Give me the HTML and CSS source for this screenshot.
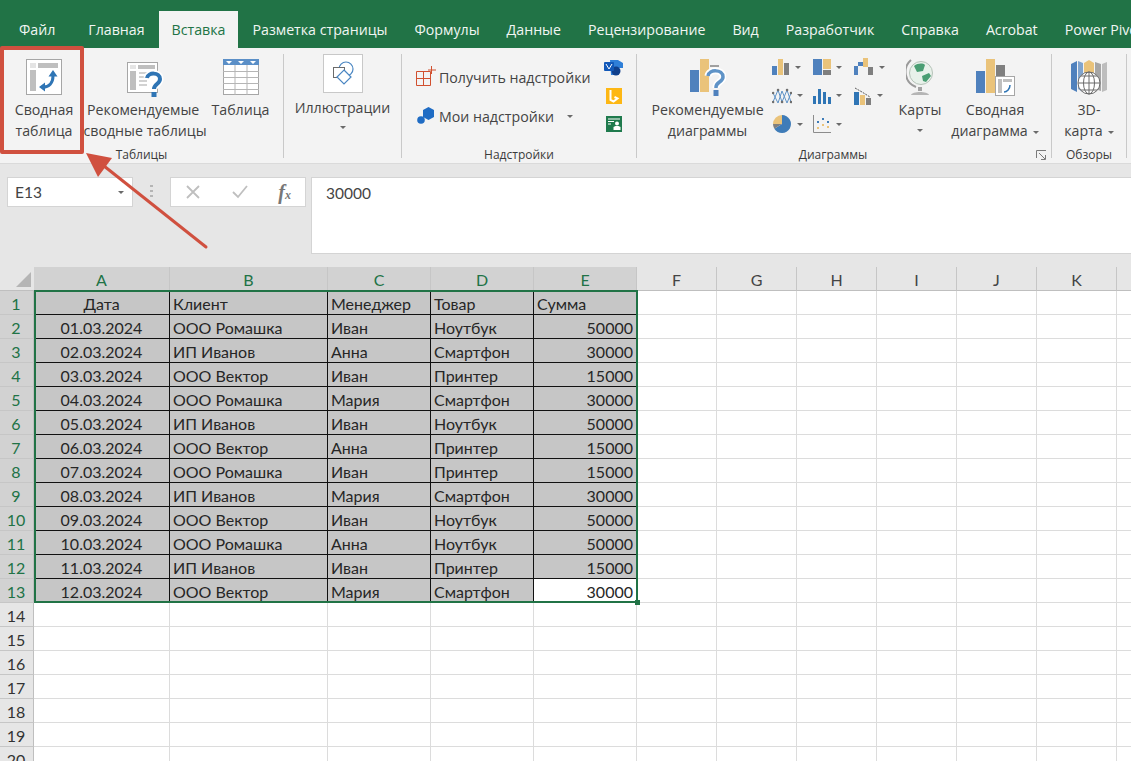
FILE: index.html
```html
<!DOCTYPE html>
<html lang="ru">
<head>
<meta charset="utf-8">
<title>Excel — Вставка</title>
<link rel="stylesheet" href="styles.css">
</head>
<body>
<div class="app">
  <nav class="tabs">
    <span class="tab first-tab">Файл</span><span class="tab">Главная</span><span class="tab active">Вставка</span><span class="tab">Разметка страницы</span><span class="tab">Формулы</span><span class="tab">Данные</span><span class="tab">Рецензирование</span><span class="tab">Вид</span><span class="tab">Разработчик</span><span class="tab">Справка</span><span class="tab">Acrobat</span><span class="tab">Power Pivot</span>
  </nav>
  <section class="ribbon">
    <div class="group g-tables">
      <div class="group-body">
        <div class="big b-pivot">
          <svg class="ico" width="36" height="36" viewBox="0 0 36 36"><rect x=".5" y=".5" width="35" height="35" fill="#fff" stroke="#a6a6a6"/><rect x="12" y="4" width="20" height="5" fill="#bfbfbf"/><rect x="4" y="4" width="6" height="5" fill="#e4e4e4"/><rect x="4" y="11" width="6" height="21" fill="#bfbfbf"/><path d="M17 28c6 0 10-4 10-11" fill="none" stroke="#2f75b5" stroke-width="3"/><path d="M13 28l6-4.500v9zM27 11l4.500 6.500h-9z" fill="#2f75b5"/></svg>
          <span>Сводная<br>таблица</span>
        </div>
        <div class="big b-rec">
          <svg class="ico ico-over" width="36" height="36" viewBox="0 0 36 36"><rect x=".5" y="3.500" width="30" height="30" fill="#fff" stroke="#a6a6a6"/><rect x="11" y="6" width="17" height="4" fill="#bfbfbf"/><rect x="3" y="6" width="6" height="4" fill="#e4e4e4"/><rect x="3" y="12" width="6" height="19" fill="#bfbfbf"/><path d="M12 14h14M12 18h8M12 22h8M12 26h8" stroke="#c4c4c4" stroke-width="1.500"/><path d="M20 19c1-6 13-6 13 1 0 5-6 5-6 10" fill="none" stroke="#fff" stroke-width="7"/><path d="M20 19c1-6 13-6 13 1 0 5-6 5-6 10" fill="none" stroke="#2f75b5" stroke-width="4"/><rect x="24.500" y="33" width="5" height="5" fill="#2f75b5"/></svg>
          <span>Рекомендуемые&nbsp;<br>сводные таблицы</span>
        </div>
        <div class="big b-table">
          <svg class="ico" width="36" height="36" viewBox="0 0 36 36"><rect x=".5" y=".5" width="35" height="35" fill="#fff" stroke="#a6a6a6"/><rect x="0" y="0" width="36" height="6" fill="#5b8fc7"/><path d="M3 2h6l-3 3zM15 2h6l-3 3zM27 2h6l-3 3z" fill="#fff"/><path d="M12 6v30M24 6v30M0 12.500h36M0 18.500h36M0 24.500h36M0 30.500h36" stroke="#b5b5b5" fill="none"/></svg>
          <span>Таблица</span>
        </div>
      </div>
      <div class="group-label">Таблицы</div>
    </div>
    <div class="group g-ill">
      <div class="group-body">
        <div class="big b-ill">
          <svg class="ico ill-ico" width="40" height="39" viewBox="0 0 40 39"><rect x=".5" y=".5" width="39" height="38" fill="#fff" stroke="#c8c8c8"/><circle cx="23" cy="15" r="7" fill="#fff" stroke="#4a86c2" stroke-width="1.200"/><rect x="10.500" y="13.500" width="11" height="10" fill="#fff" stroke="#6b6b6b"/><path d="M21 16l7 7-7 7-7-7z" fill="#fff" stroke="#4a86c2" stroke-width="1.200"/></svg>
          <span>Иллюстрации</span>
          <i class="caret caret-solo"></i>
        </div>
      </div>
    </div>
    <div class="group g-addins">
      <div class="group-body addins-body">
        <div class="addin-list">
          <div class="addin first">
            <svg width="20" height="20" viewBox="0 0 20 20"><path d="M.5 5.500h14v14H.5zM7.500 5.500v14M.5 12.500h14" fill="none" stroke="#d1502f"/><path d="M15.500 0v8M12 4h8" stroke="#d1502f"/></svg>
            <span>Получить надстройки</span>
          </div>
          <div class="addin second">
            <svg width="18" height="18" viewBox="0 0 18 18"><path d="M11.500 0l5.500 3v7l-5.500 3L6 10V3z" fill="#1f6cc4"/><circle cx="4" cy="13" r="3.800" fill="#1f6cc4"/></svg>
            <span>Мои надстройки</span>
            <i class="caret"></i>
          </div>
        </div>
        <div class="addin-apps">
          <svg width="19" height="16" viewBox="0 0 19 16"><path d="M6 0h8l5 3v5h-6l-2 7H7z" fill="#2f7fd8"/><circle cx="12" cy="11" r="4.500" fill="#0f3f8c"/><rect y="2" width="10" height="9" rx="1" fill="#1258b8"/><path d="M2 4l3 5 3-5" fill="none" stroke="#fff"/></svg>
          <svg width="16" height="16" viewBox="0 0 16 16"><rect width="16" height="16" fill="#fdb714"/><path d="M4.500 2v10l3 1.500 4-3-3-1.500" fill="none" stroke="#fff" stroke-width="2"/></svg>
          <svg width="16" height="16" viewBox="0 0 16 16"><rect width="16" height="16" fill="#1f7a4d"/><path d="M2 3h12M2 5.500h6M2 8h3" stroke="#fff"/><circle cx="11" cy="7.500" r="2" fill="#fff"/><path d="M7.500 14v-3l2-1h3l2 1v3z" fill="#fff"/></svg>
        </div>
      </div>
      <div class="group-label">Надстройки</div>
    </div>
    <div class="group g-charts">
      <div class="group-body charts-body">
        <div class="big b-recchart">
          <svg class="ico tall" width="36" height="37" viewBox="0 0 36 37"><rect x="0" y="11" width="9" height="22" fill="#4f81bd"/><rect x="10" y="0" width="9" height="33" fill="#eac37a"/><rect x="20" y="6" width="9" height="2" fill="#a0a0a0"/><path d="M18 17c1-7 15-7 15 1 0 5-7 5-7 10v1" fill="none" stroke="#fff" stroke-width="7"/><path d="M18 17c1-7 15-7 15 1 0 5-7 5-7 10v1" fill="none" stroke="#5f93c7" stroke-width="3.500"/><rect x="23.500" y="31" width="5" height="6" fill="#4f81bd"/></svg>
          <span>Рекомендуемые<br>диаграммы</span>
        </div>
        <div class="chart-grid">
          <div class="mini"><svg width="18" height="18" viewBox="0 0 18 18"><rect y="8" width="5" height="9" fill="#4f81bd"/><rect x="6" y="1" width="5" height="16" fill="#eac37a"/><rect x="12" y="5" width="5" height="12" fill="#7f7f7f"/></svg><i class="caret"></i></div>
          <div class="mini"><svg width="18" height="18" viewBox="0 0 18 18"><rect y="1" width="9" height="16" fill="#4f81bd"/><rect x="10" y="1" width="8" height="10" fill="#eac37a"/><rect x="10" y="12" width="8" height="5" fill="#7f7f7f"/></svg><i class="caret"></i></div>
          <div class="mini"><svg width="20" height="18" viewBox="0 0 20 18"><rect y="8" width="4" height="9" fill="#4f81bd"/><rect x="4" y="4" width="5" height="4" fill="#4f81bd"/><rect x="9" y="0" width="5" height="9" fill="#eac37a"/><rect x="14" y="9" width="5" height="8" fill="#7f7f7f"/></svg><i class="caret"></i></div>
          <div class="mini"><svg width="20" height="18" viewBox="0 0 20 18"><path d="M1 15L6 3l4 12 5-12 4 12M1 6l5 10 4-12 5 12 4-10" fill="none" stroke="#5f93c7"/><path d="M6 3h.1M10 15h.1M15 3h.1M1 6h.1M19 6h.1M1 15h.1M19 15h.1" stroke="#6f6f6f" stroke-width="2.500" stroke-linecap="round"/></svg><i class="caret"></i></div>
          <div class="mini"><svg width="18" height="18" viewBox="0 0 18 18"><path d="M0 9h3v8H0zM5 2h3v15H5zM10 5h3v12h-3zM15 10h3v7h-3z" fill="#2f75b5"/></svg><i class="caret"></i></div>
          <div class="mini"><svg width="18" height="18" viewBox="0 0 18 18"><rect y="5" width="5" height="13" fill="#2f75b5"/><rect x="6" y="8" width="5" height="10" fill="#eac37a"/><rect x="12" y="11" width="5" height="7" fill="#7f7f7f"/><path d="M1 1l7 4 8 5" fill="none" stroke="#595959" stroke-dasharray="2 1"/></svg><i class="caret"></i></div>
          <div class="mini"><svg width="20" height="20" viewBox="0 0 20 20"><path d="M10 1a9 9 0 1 1-7.700 13.700L10 10z" fill="#3f7cb8"/><path d="M10 10V1a9 9 0 0 0-9 9z" fill="#eac37a"/><path d="M1 10a9 9 0 0 0 1.300 4.700L10 10z" fill="#7f7f7f"/></svg><i class="caret"></i></div>
          <div class="mini"><svg width="18" height="18" viewBox="0 0 18 18"><path d="M.5 0v17.500H18" fill="none" stroke="#8c8c8c"/><path d="M4 12h2v2H4zM9 9h2v2H9zM14 11h2v2h-2z" fill="#eac37a"/><path d="M4 6h2v2H4zM9 3h2v2H9zM14 6h2v2h-2z" fill="#3f7cb8"/></svg><i class="caret"></i></div>
        </div>
        <div class="big b-maps">
          <svg class="ico tall" width="28" height="37" viewBox="0 0 28 37"><circle cx="15" cy="14" r="11.500" fill="#e8f1ea" stroke="#b5c2b8"/><path d="M8 7c4-3 9-3 11-1l-2 6-6 1zM16 17l7-3 2 3-5 6-3-1z" fill="#4a9e73"/><path d="M5 1a16 16 0 0 0 5 27" fill="none" stroke="#9a9a9a" stroke-width="2"/><rect x="12" y="28" width="4" height="4" fill="#a3a3a3"/><path d="M5 36c1-4 17-4 18 0z" fill="#b5b5b5"/></svg>
          <span>Карты</span>
          <i class="caret caret-maps"></i>
        </div>
        <div class="big b-pivotchart">
          <svg class="ico tall" width="39" height="37" viewBox="0 0 39 37"><rect y="12" width="9" height="22" fill="#4f81bd"/><rect x="10" y="0" width="9" height="34" fill="#eac37a"/><rect x="20" y="6" width="9" height="12" fill="#7f7f7f"/><rect x="19.500" y="17.500" width="19" height="19" fill="#fff" stroke="#a6a6a6"/><rect x="27" y="20" width="9" height="3" fill="#bfbfbf"/><rect x="22" y="20" width="4" height="14" fill="#bfbfbf"/><path d="M28 33c3 0 6-3 6-7" fill="none" stroke="#2f75b5" stroke-width="1.500"/></svg>
          <span>Сводная<br>диаграмма<i class="caret caret-inline"></i></span>
        </div>
      </div>
      <div class="group-label label-charts">Диаграммы</div>
      <svg class="launcher" width="11" height="11" viewBox="0 0 11 11"><path d="M.5 8V.5H10M3 3l6 6M5 9.500h4.500V5" fill="none" stroke="#7a7a7a"/></svg>
    </div>
    <div class="group g-tours">
      <div class="group-body">
        <div class="big b-3d">
          <svg class="ico tall" width="36" height="37" viewBox="0 0 36 37"><path d="M0 5l6-3v31l-6-3z" fill="#4f81bd"/><path d="M7 2l5 2v29l-5-3z" fill="#4f81bd" opacity=".7"/><path d="M13 4l5-3 5 3v16H13z" fill="#eac37a"/><path d="M24 3l6 2v27l-6-2z" fill="#a6a6a6"/><path d="M31 5l5-2v28l-5 2z" fill="#bdbdbd"/><circle cx="18" cy="24" r="11" fill="#fff" stroke="#6b6b6b"/><path d="M7 24h22M18 13v22M10 17h16M10 31h16" stroke="#6b6b6b" fill="none"/><ellipse cx="18" cy="24" rx="5.500" ry="11" fill="none" stroke="#6b6b6b"/></svg>
          <span>3D-<br>карта<i class="caret caret-inline"></i></span>
        </div>
      </div>
      <div class="group-label">Обзоры</div>
    </div>
  </section>
  <section class="formula-zone">
    <div class="namebox"><span>E13</span><i class="caret"></i></div>
    <div class="grip"></div>
    <div class="fx-buttons">
      <svg width="16" height="14" viewBox="0 0 16 14"><path d="M2 1l12 12M14 1L2 13" stroke="#bfbfbf" stroke-width="1.800"/></svg>
      <svg width="16" height="14" viewBox="0 0 16 14"><path d="M1 7l5 5 9-11" fill="none" stroke="#bfbfbf" stroke-width="1.800"/></svg>
      <span class="fx">f<small>x</small></span>
    </div>
    <div class="formula-input">30000</div>
  </section>
  <section class="sheet" id="sheet"></section>
  <div class="red-box"></div>
  <svg class="arrow" width="130" height="110" viewBox="0 0 130 110"><path d="M122 95L20 14" stroke="#d0503f" stroke-width="3" stroke-linecap="round"/><path d="M2 1L28 6 14 25z" fill="#d0503f"/></svg>
</div>
<script src="app.js"></script>
</body>
</html>
```
FILE: styles.css
```css
* { box-sizing: border-box; }
html, body { margin: 0; height: 100%; overflow: hidden; }
body { font-family: "Open Sans", "Liberation Sans", sans-serif; color: #3b3b3b; background: #e6e6e6; }
.app { position: relative; width: 1131px; height: 761px; overflow: hidden; }

.tabs { height: 48px; background: #217346; display: flex; align-items: flex-end; gap: 1px; padding-left: 6px; white-space: nowrap; overflow: hidden; }
.tab { height: 37px; padding: 0 13px; color: #f1f6f3; font-size: 14.2px; line-height: 37px; flex: none; }
.first-tab { margin-right: 6px; }
.tab.active { background: #f3f3f3; color: #217346; }

.ribbon { height: 116px; background: #f3f3f3; display: flex; border-bottom: 1px solid #dadada; font-size: 14.2px; line-height: 21px; }
.group { position: relative; flex: none; border-right: 1px solid #c9c9c9; margin: 6px 0 5px; display: flex; flex-direction: column; }
.group-body { flex: 1; display: flex; min-height: 0; }
.group-label { height: 20px; margin-bottom: -7px; font-size: 12px; line-height: 20px; text-align: center; }
.label-charts { padding-right: 22px; }
.g-tables { width: 284px; }
.g-ill { width: 118px; }
.g-addins { width: 235px; }
.g-charts { width: 415px; }
.g-tours { width: 75px; }

.big { display: flex; flex-direction: column; align-items: center; text-align: center; color: #444; flex: none; white-space: nowrap; }
.big span { display: block; }
.ico { display: block; flex: none; margin-top: 5px; margin-bottom: 4px; }
.ico-over { overflow: visible; }
.ico.tall { margin-bottom: 3px; }
.b-pivot { width: 86px; margin-left: 1px; }
.b-rec { width: 116px; }
.b-table { width: 75px; }
.b-ill { width: 117px; }
.ill-ico { margin-top: 0; }

.caret { display: inline-block; width: 0; height: 0; border-left: 3.500px solid transparent; border-right: 3.500px solid transparent; border-top: 3.500px solid #6a6a6a; flex: none; }
.caret-solo { margin-top: 8px; }
.caret-maps { margin-top: 9px; }
.caret-inline { margin-left: 5px; vertical-align: middle; }

.addins-body { padding-left: 14px; }
.addin-list { width: 188px; padding-top: 12px; display: flex; flex-direction: column; gap: 17px; }
.addin { display: flex; align-items: center; height: 22px; gap: 3px; white-space: nowrap; color: #444; }
.addin.second { gap: 4px; padding-left: 1px; }
.addin.second .caret { margin-left: 9px; }
.addin.first svg { margin-top: -2px; }
.addin-apps { display: flex; flex-direction: column; align-items: center; width: 19px; gap: 12px; padding-top: 6px; }

.charts-body { padding-left: 13px; }
.b-recchart { width: 115px; }
.chart-grid { width: 125px; margin: -1px 0 0 7px; display: grid; grid-template-columns: repeat(3, 41px); grid-auto-rows: 28.500px; }
.mini { display: flex; align-items: center; gap: 5px; }
.b-maps { width: 46px; }
.b-pivotchart { width: 100px; margin-left: 2px; }
.launcher { position: absolute; right: 4px; bottom: -3px; }
.b-3d { width: 74px; }

.formula-zone { height: 103px; background: #e6e6e6; display: flex; align-items: flex-start; padding: 13px 0 0 7px; font-family: Lato, "Liberation Sans", sans-serif; }
.namebox { width: 127px; height: 30px; background: #fff; border: 1px solid #d4d4d4; display: flex; align-items: center; justify-content: space-between; padding: 0 8px 0 7px; font-size: 15.500px; color: #444; }
.grip { width: 3px; height: 14px; margin: 8px 17px 0 17px; background: repeating-linear-gradient(#b5b5b5 0 2px, transparent 2px 5px); flex: none; }
.fx-buttons { width: 136px; height: 30px; background: #fff; border: 1px solid #d4d4d4; display: flex; align-items: center; justify-content: space-between; padding: 0 14px; flex: none; }
.fx { font-family: "Liberation Serif", serif; font-style: italic; font-size: 20px; font-weight: bold; color: #777; line-height: 1; }
.fx small { font-size: 12px; }
.formula-input { width: 820px; height: 77px; margin-left: 5px; background: #fff; border: 1px solid #d4d4d4; border-right: 0; padding: 4px 0 0 14px; font-size: 15.500px; line-height: 22px; color: #444; flex: none; }

.sheet { display: grid; grid-template-columns: 34px 136px 158px 103px 103px 103px repeat(7, 80px); grid-auto-rows: 24px; background: #fff; font-family: Lato, "Liberation Sans", sans-serif; font-size: 16px; line-height: 25px; color: #262626; position: relative; overflow: hidden; height: 494px; }
.corner { background: #e6e6e6; border-bottom: 1px solid #bfbfbf; position: relative; }
.corner::after { content: ""; position: absolute; right: 3px; bottom: 3px; border-left: 15px solid transparent; border-bottom: 15px solid #b5b5b5; }
.colh { background: #e6e6e6; border-right: 1px solid #c6c6c6; border-bottom: 1px solid #bfbfbf; text-align: center; color: #444; overflow: hidden; }
.colh.sel { background: #d2d2d2; color: #217346; }
.rowh { background: #e6e6e6; border-bottom: 1px solid #c6c6c6; border-right: 1px solid #bfbfbf; text-align: center; color: #333; padding-right: 1px; overflow: hidden; }
.rowh.sel { background: #d2d2d2; color: #217346; }
.cell { border-right: 1px solid #dcdcdc; border-bottom: 1px solid #dcdcdc; padding: 0 3px; white-space: nowrap; overflow: hidden; }
.cell.data { background: #c6c6c6; border-right: 1px solid #111; border-bottom: 1px solid #111; }
.cell.data.last-col { border-right-color: #c6c6c6; }
.cell.data.last-row { border-bottom-color: #c6c6c6; }
.cell.c { text-align: center; }
.cell.r { text-align: right; }
.cell.active { background: #fff; border-bottom-color: #fff; border-right-color: #fff; }
.selection { position: absolute; left: 34px; top: 23px; width: 604px; height: 313px; border: 2px solid #217346; pointer-events: none; }
.selection::after { content: ""; position: absolute; right: -4px; bottom: -4px; width: 5px; height: 5px; background: #217346; }

.red-box { position: absolute; left: 0; top: 46px; width: 84px; height: 108px; border: 4px solid #d0503f; border-radius: 2px; pointer-events: none; }
.arrow { position: absolute; left: 84px; top: 152px; pointer-events: none; }
```
FILE: app.js
```js
var cols = ["A","B","C","D","E","F","G","H","I","J","K","L"];
var rows = [
  ["Дата","Клиент","Менеджер","Товар","Сумма"],
  ["01.03.2024","ООО Ромашка","Иван","Ноутбук","50000"],
  ["02.03.2024","ИП Иванов","Анна","Смартфон","30000"],
  ["03.03.2024","ООО Вектор","Иван","Принтер","15000"],
  ["04.03.2024","ООО Ромашка","Мария","Смартфон","30000"],
  ["05.03.2024","ИП Иванов","Иван","Ноутбук","50000"],
  ["06.03.2024","ООО Вектор","Анна","Принтер","15000"],
  ["07.03.2024","ООО Ромашка","Иван","Принтер","15000"],
  ["08.03.2024","ИП Иванов","Мария","Смартфон","30000"],
  ["09.03.2024","ООО Вектор","Иван","Ноутбук","50000"],
  ["10.03.2024","ООО Ромашка","Анна","Ноутбук","50000"],
  ["11.03.2024","ИП Иванов","Иван","Принтер","15000"],
  ["12.03.2024","ООО Вектор","Мария","Смартфон","30000"]
];
var sheet = document.getElementById("sheet");
function add(cls, text) {
  var d = document.createElement("div");
  d.className = cls;
  if (text) d.textContent = text;
  sheet.appendChild(d);
}
add("corner");
cols.forEach(function (c, i) { add("colh" + (i < 5 ? " sel" : ""), c); });
for (var r = 0; r < 20; r++) {
  add("rowh" + (r < 13 ? " sel" : ""), String(r + 1));
  for (var c = 0; c < 12; c++) {
    if (r < 13 && c < 5) {
      var cls = "cell data";
      if (c === 0) cls += " c";
      if (c === 4) cls += " last-col";
      if (r === 12) cls += " last-row";
      if (c === 4 && r > 0) cls += " r";
      if (c === 4 && r === 12) cls += " active";
      add(cls, rows[r][c]);
    } else {
      add("cell");
    }
  }
}
add("selection");
```
